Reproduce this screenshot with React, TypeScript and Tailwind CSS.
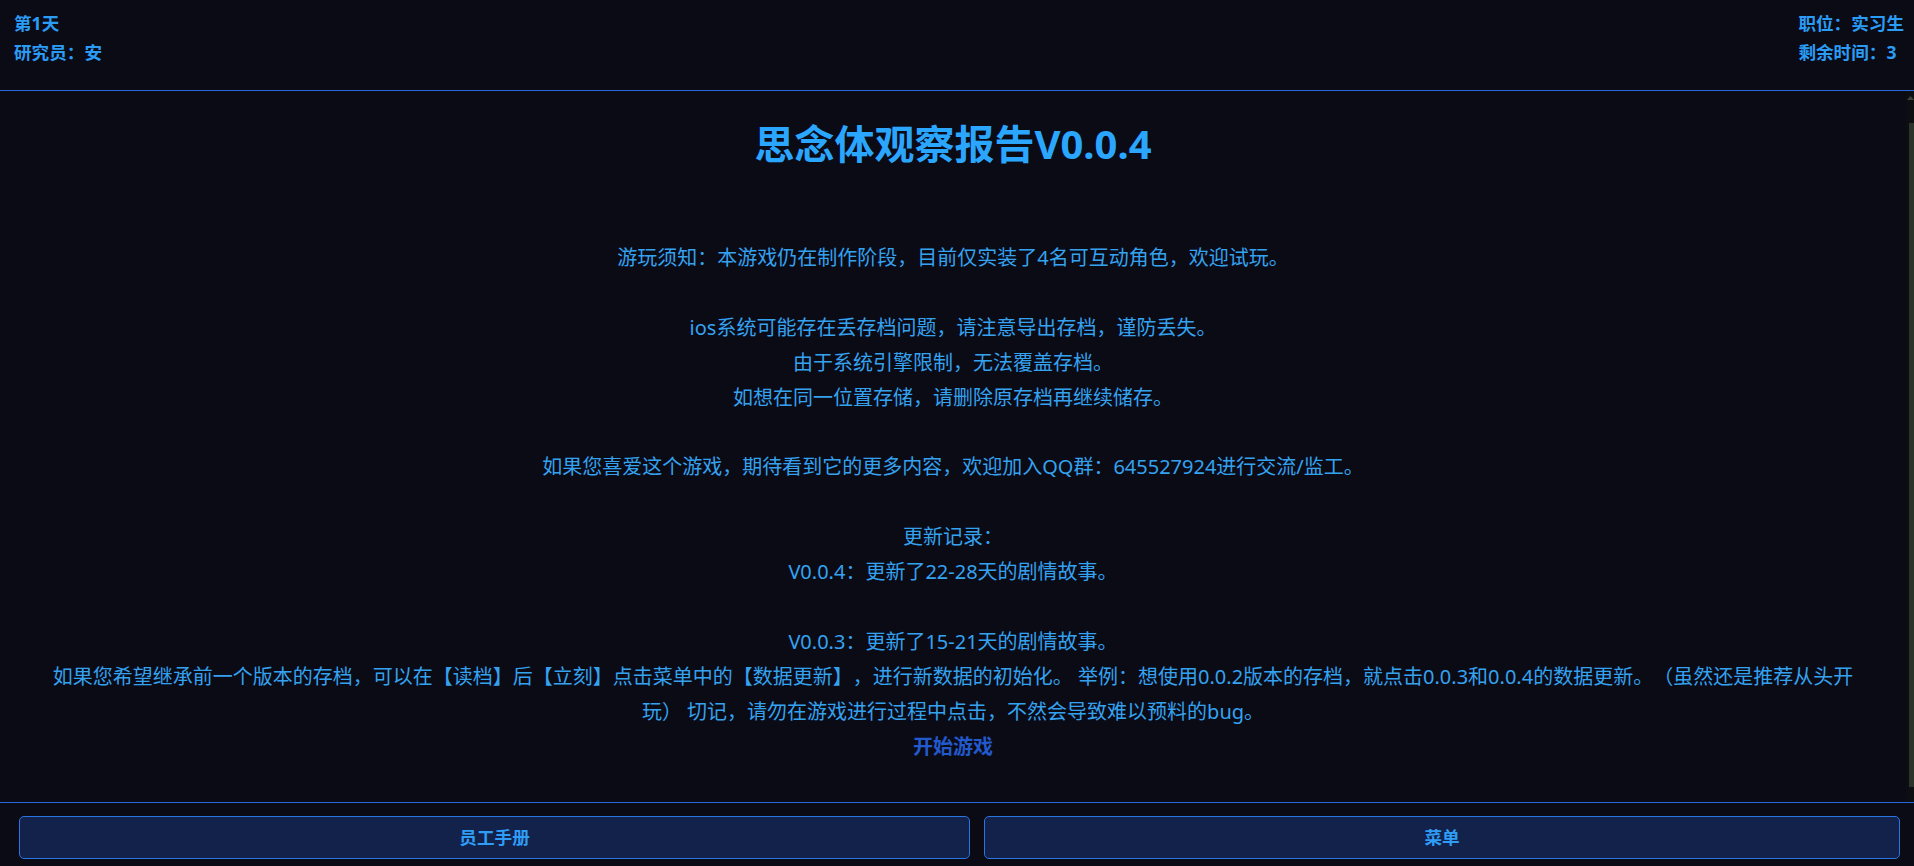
import React from "react";

const font = { fontFamily: '"Noto Sans", "Noto Sans CJK SC", sans-serif' };

export default function App() {
  return (
    <div
      className="flex h-screen flex-col overflow-hidden bg-[#0a0b15] text-[#2f9ef2] [text-spacing-trim:space-all]"
      style={font}
    >
      {/* Top status bar */}
      <header className="flex h-[91px] shrink-0 items-start justify-between border-b border-[#2b66dc] pl-[14px] pr-[10px] pt-[9px] text-[17.6px] font-bold leading-[29px] text-[#2b9cf5]">
        <div className="flex flex-col">
          <span>第1天</span>
          <span>研究员：安</span>
        </div>
        <div className="flex flex-col items-start">
          <span>职位：实习生</span>
          <span>剩余时间：3</span>
        </div>
      </header>

      {/* Story area with its scrollbar */}
      <div className="flex min-h-0 flex-1">
        <main className="min-w-0 flex-1 overflow-hidden px-[48px] pt-[29px] text-center">
          <h1 className="mb-[73px] text-[40px] font-bold leading-[48px] text-[#2ba6ff]">
            思念体观察报告V0.0.4
          </h1>

          <p className="text-[20px] leading-[34.9px] text-[#35a2f0]">
            游玩须知：本游戏仍在制作阶段，目前仅实装了4名可互动角色，欢迎试玩。
            <br />
            <br />
            ios系统可能存在丢存档问题，请注意导出存档，谨防丢失。
            <br />
            由于系统引擎限制，无法覆盖存档。
            <br />
            如想在同一位置存储，请删除原存档再继续储存。
            <br />
            <br />
            如果您喜爱这个游戏，期待看到它的更多内容，欢迎加入QQ群：645527924进行交流/监工。
            <br />
            <br />
            更新记录：
            <br />
            V0.0.4：更新了22-28天的剧情故事。
            <br />
            <br />
            V0.0.3：更新了15-21天的剧情故事。
            <br />
            如果您希望继承前一个版本的存档，可以在【读档】后【立刻】点击菜单中的【数据更新】，进行新数据的初始化。 举例：想使用0.0.2版本的存档，就点击0.0.3和0.0.4的数据更新。（虽然还是推荐从头开玩） 切记，请勿在游戏进行过程中点击，不然会导致难以预料的bug。
          </p>

          <button className="text-[20px] font-bold leading-[34.9px] text-[#2259cc]">
            开始游戏
          </button>
        </main>

        <div className="flex w-[8px] shrink-0 flex-col bg-[#0c0e12] pb-[15px]">
          <svg viewBox="0 0 8 8" className="mt-[3px] h-[8px] w-[8px] shrink-0">
            <path d="M1 6 L4.5 2 L8 6 Z" fill="#3a4438" />
          </svg>
          <div className="mt-[21px] ml-[3px] flex-1 bg-[#2c332b]" />
        </div>
      </div>

      {/* Bottom actions */}
      <footer className="flex h-[64px] shrink-0 gap-[14px] border-t border-[#2b66dc] pb-[7px] pl-[19px] pr-[14px] pt-[13px]">
        <button className="flex-auto rounded-[5px] border border-[#2a74e4] bg-[#12224a] text-[17.6px] font-bold text-[#2f9cf5]">
          员工手册
        </button>
        <button className="flex-auto rounded-[5px] border border-[#2a74e4] bg-[#12224a] text-[17.6px] font-bold text-[#2f9cf5]">
          菜单
        </button>
      </footer>
    </div>
  );
}
